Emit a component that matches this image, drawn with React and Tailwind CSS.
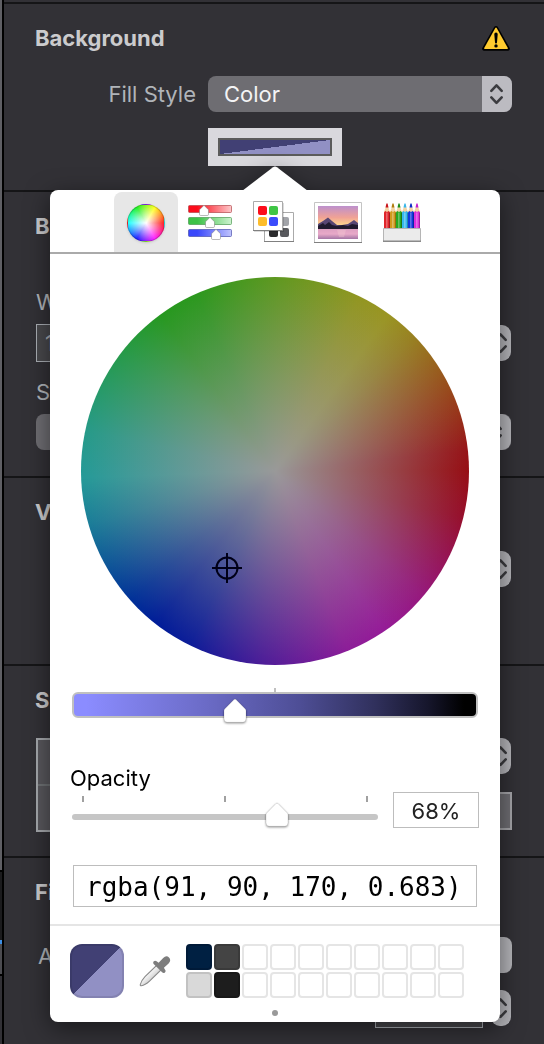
import React, { useState } from "react";

function Chevrons() {
  return (
    <svg viewBox="0 0 30 36" className="h-9 w-[30px] shrink-0" fill="none" stroke="#3c3c40" strokeWidth="2.6" strokeLinecap="round" strokeLinejoin="round" aria-hidden="true">
      <path d="M9.3 14.8 14.5 9.4l5.2 5.4M9.3 21.4l5.2 5.4 5.2-5.4" />
    </svg>
  );
}

function Section({ title, warning, className, children }) {
  return (
    <section className={"border-b-2 border-[#151517] px-8 pt-5 " + className}>
      <div className="-ml-px flex h-7 items-center justify-between">
        <h2 className="text-[22px] leading-7 font-bold text-[#cbcbcd]">{title}</h2>
        {warning}
      </div>
      {children}
    </section>
  );
}

function Warning() {
  return (
    <svg viewBox="0 0 30 28" className="mr-px h-7 w-[30px]" role="img" aria-label="Warning">
      <path d="M13 3.2a2.2 2.2 0 0 1 4 0l11.6 20.6a2 2 0 0 1-1.8 3H3.2a2 2 0 0 1-1.8-3z" fill="#000" />
      <path d="M14.3 4a.9.9 0 0 1 1.4 0L26.8 24a.8.8 0 0 1-.7 1.1H3.9a.8.8 0 0 1-.7-1.1z" fill="#ffcb2f" />
      <path d="M13.3 10.2a1.7 1.7 0 0 1 3.4 0l-.7 8.2a1 1 0 0 1-2 0z" fill="#000" />
      <circle cx="15" cy="21.9" r="1.7" fill="#000" />
    </svg>
  );
}

function Stepper({ label }) {
  return (
    <button aria-label={label} className="mr-px flex h-9 w-5 items-center justify-center overflow-hidden rounded-[9px] bg-[#b4b4b9]">
      <Chevrons />
    </button>
  );
}

function WheelIcon() {
  return <span className="mt-px block size-[38px] rounded-full border border-[#00000030] bg-[radial-gradient(closest-side,#fff,#ffffff00),conic-gradient(from_90deg,#ff2020,#ff20ff,#2020ff,#20ffff,#20f020,#ffff20,#ff2020)] shadow-sm" />;
}

const bars = [
  { y: 1, x: 16, from: "#fb0d1b", to: "#fdc9cb", edge: "#b0474b" },
  { y: 13, x: 22, from: "#3cc146", to: "#cdf3cf", edge: "#4d9a52" },
  { y: 25, x: 28, from: "#3a48fb", to: "#c0c4fd", edge: "#4b51ad" },
];

function SlidersIcon() {
  return (
    <svg viewBox="0 0 44 36" className="h-9 w-11 overflow-visible" aria-hidden="true">
      {bars.map((b) => (
        <g key={b.y}>
          <linearGradient id={"bar" + b.y}>
            <stop offset=".2" stopColor={b.from} />
            <stop offset="1" stopColor={b.to} />
          </linearGradient>
          <rect x=".5" y={b.y + 0.5} width="43" height="7" rx="1" fill={"url(#bar" + b.y + ")"} stroke={b.edge} strokeOpacity=".7" />
          <path transform={`translate(${b.x} ${b.y})`} d="M0 .3 4.500 4.800V9.300q0 1.200-1.200 1.200h-6.600q-1.200 0-1.200-1.200V4.800z" fill="#fff" stroke="#777" strokeWidth=".5" />
        </g>
      ))}
    </svg>
  );
}

function PalettesIcon() {
  return (
    <svg viewBox="0 0 42 42" className="h-[42px] w-[42px] overflow-visible" aria-hidden="true">
      <path d="M11.5 11.5h29v29h-29z" fill="#fff" stroke="#aaa" />
      <path d="M11 40.5h30" stroke="#808080" />
      <g fill="#a2a4a9">
        <rect x="16" y="16" width="9" height="9" rx="2" />
        <rect x="27" y="16" width="9" height="9" rx="2" />
      </g>
      <rect x="16" y="27" width="9" height="9" rx="2" fill="#2c2c2e" />
      <rect x="27" y="27" width="9" height="9" rx="2" fill="#58595d" />
      <path d="M1 2h30v29H1z" fill="#000" opacity=".14" />
      <path d="M.5.5h29v29H.5z" fill="#fff" stroke="#aaa" />
      <path d="M0 29.5h30" stroke="#808080" />
      <rect x="5" y="5" width="9" height="9" rx="2" fill="#fc0d1b" />
      <rect x="16" y="5" width="9" height="9" rx="2" fill="#3fc545" />
      <rect x="5" y="16" width="9" height="9" rx="2" fill="#fdbd2c" />
      <rect x="16" y="16" width="9" height="9" rx="2" fill="#3b4cfc" />
    </svg>
  );
}

function PictureIcon() {
  return (
    <svg viewBox="0 0 48 41" className="h-[41px] w-12" aria-hidden="true">
      <linearGradient id="dusk" x2="0" y2="1">
        <stop offset="0" stopColor="#bd90cd" />
        <stop offset=".5" stopColor="#f0a295" />
        <stop offset=".85" stopColor="#ffd88c" />
      </linearGradient>
      <linearGradient id="lake" x2="0" y2="1">
        <stop offset="0" stopColor="#dda0c1" />
        <stop offset=".5" stopColor="#e8a9c8" />
        <stop offset="1" stopColor="#a375a5" />
      </linearGradient>
      <path d="M.5.5h47v40H.5z" fill="#fff" stroke="#c4c4c4" />
      <path d="M0 40.5h48" stroke="#808080" />
      <path d="M4 4h40v23H4z" fill="url(#dusk)" />
      <path d="M4 22 9 19l5-3.500 4 3.500 5 4 5 0 6-1 6-4 4 3v6H4z" fill="#584673" />
      <path d="m4 24 5-3 2 2 4-3 3 3 5 1 6-1 5 1 4-2 6 1v4H4z" fill="#201a2e" />
      <path d="M4 27h40v10H4z" fill="url(#lake)" />
      <path d="M23 28h9l-2 7h-5z" fill="#f7cdd5" opacity=".35" />
    </svg>
  );
}

const pencils = ["#e0252b", "#d09a1c", "#27a820", "#35b8f0", "#1238dc", "#dd2ddc"];
const tips = ["#c8141c", "#b07c10", "#1f8f1a", "#38b6ea", "#0f2cc8", "#c420d0"];

function PencilsIcon() {
  return (
    <svg viewBox="0 0 38 39" className="h-[39px] w-[38px]" aria-hidden="true">
      {pencils.map((color, i) => (
        <g key={color} transform={`translate(${1 + i * 6} 0)`}>
          <path d="M0 9 3 1l3 8v2H0z" fill="#f3d4a4" />
          <path d="M1.5 4.4 2.4.6h1.2l.9 3.8z" fill={tips[i]} />
          <path d="M0 9.4 1.2 8 3 9l1.8-1L6 9.4V26H0z" fill={color} />
          <path d="M2 9.4h1.6V26H2z" fill="#fff" opacity=".3" />
          <path d="M5 9.4h1V26H5z" fill="#000" opacity=".28" />
        </g>
      ))}
      <path d="M.5 25.5h37v13H.5z" fill="#ebebeb" stroke="#b5b5b5" />
      <path d="M0 38.3h38" stroke="#8a8a8a" strokeWidth="1.4" />
    </svg>
  );
}

function Thumb({ left, top }) {
  return (
    <span className={"pointer-events-none absolute -ml-3 h-[26px] w-6 " + top} style={{ left }}>
      <svg viewBox="0 0 24 26" className="block h-[26px] w-6 overflow-visible drop-shadow-[0_1px_1px_#00000070]" aria-hidden="true">
        <path d="M11 1.5q1-1 2 0l9.4 9.6q.6.6.6 1.6v8.1q0 3.5-3.5 3.5h-15Q1 24.3 1 20.800v-8.100q0-1 .6-1.6z" fill="#fff" stroke="#000" strokeOpacity=".18" strokeWidth=".6" />
      </svg>
    </span>
  );
}

function Eyedropper() {
  return (
    <svg viewBox="0 0 32 32" className="h-8 w-8" aria-hidden="true">
      <linearGradient id="glass" x1="0" y1="0" x2="1" y2="1">
        <stop offset=".35" stopColor="#fff" />
        <stop offset=".7" stopColor="#c4c4c4" />
      </linearGradient>
      <path d="M18.500 9.500 23 14 10.500 26.200Q6 30.300 2.300 30.800 1 30.800 1.300 29.500 2.300 25.500 6 21.600z" fill="url(#glass)" stroke="#8a8a8a" strokeWidth="1.1" />
      <path d="M14.800 6.300q1.400-1.200 2.800 0l2 1.500 4.600-4.800q3-3 5.800-.6 2.600 2.900-.4 6l-4.700 4.400 1 1.700q1.400 1.600 0 3-1.400 1.200-2.800-.2l-8.200-8q-1.400-1.500-.1-3z" fill="#7d7d7d" />
    </svg>
  );
}

const tabs = [
  { name: "Color wheel", icon: WheelIcon },
  { name: "Color sliders", icon: SlidersIcon },
  { name: "Color palettes", icon: PalettesIcon },
  { name: "Image palettes", icon: PictureIcon },
  { name: "Pencils", icon: PencilsIcon },
];

const swatches = [
  "border-[#001a38] bg-[#002042]",
  "border-[#3a3a3a] bg-[#444444]",
  ...Array(8).fill("border-[#e5e5e5] bg-white"),
  "border-[#c2c2c2] bg-[#d9d9d9]",
  "border-[#181818] bg-[#1d1d1d]",
  ...Array(8).fill("border-[#e5e5e5] bg-white"),
];

function ColorPopover() {
  const [tab, setTab] = useState(0);
  const [shade, setShade] = useState(40);
  const [opacity, setOpacity] = useState(68);
  return (
    <div role="dialog" aria-label="Colors" className="absolute top-full left-1/2 z-10 w-[450px] -translate-x-1/2 drop-shadow-[0_6px_12px_#00000080]">
      <svg viewBox="0 0 66 25" className="mx-auto -mb-px block h-[25px] w-[66px]" aria-hidden="true">
        <path d="M0 25 31 1.200q2-1.400 4 0L66 25z" fill="#fff" />
      </svg>
      <div className="rounded-lg bg-white text-black">
        <div role="tablist" className="flex justify-center border-b-2 border-[#aaa] pt-0.5 pr-0.5">
          {tabs.map(({ name, icon: Icon }, i) => (
            <button key={name} role="tab" aria-label={name} aria-selected={tab === i} onClick={() => setTab(i)} className={"flex h-[60px] w-16 items-center justify-center rounded-t-lg " + (tab === i ? "bg-[#e7e7e7]" : "")}>
              <Icon />
            </button>
          ))}
        </div>

        <div className="px-[31px] pt-[23px]">
          <div className="relative aspect-square w-full rounded-full bg-[radial-gradient(closest-side,#999,#99999900),conic-gradient(from_90deg,#960e14_0deg,#960f2c_14deg,#96187c_40deg,#951b98_56deg,#8c1d98_68deg,#4c1c98_94deg,#0c1c98_116deg,#001c98_128deg,#003098_138deg,#1a7c98_164deg,#249a98_178deg,#269a88_192deg,#269a48_218deg,#26981f_234deg,#2c981e_246deg,#629820_272deg,#929621_296deg,#9a9522_306deg,#988020_316deg,#98401a_338deg,#961418_354deg,#960e14_360deg)]">
            <svg viewBox="0 0 30 30" className="absolute top-[71.2%] left-[33.8%] size-[30px]" fill="none" stroke="#000018" strokeWidth="2" aria-hidden="true">
              <circle cx="15" cy="15" r="10.500" />
              <path d="M15 0v30M0 15h30" />
            </svg>
          </div>
        </div>

        <div className="px-[22px] pt-[23px]">
          <div className="mx-auto h-1 w-0.5 bg-[#c0c0c0]" />
          <div className="relative h-[26px] rounded-md border-2 border-[#c0c0c0] bg-[linear-gradient(90deg,#8b8cff_3%,#6c6cc8_32%,#4e4e96_56%,#30305c_75%,#16162c_88%,#000_97%)]">
            <Thumb left={shade + "%"} top="top-1" />
            <input type="range" aria-label="Brightness" value={shade} onChange={(e) => setShade(+e.target.value)} className="absolute inset-0 size-full opacity-0" />
          </div>
        </div>

        <div className="flex items-end pt-[46px] pr-[21px] pl-[22px]">
          <div className="flex-1">
            <label htmlFor="opacity" className="-ml-0.5 block text-[22px] leading-7">Opacity</label>
            <div className="mt-1 flex justify-between px-2.5">
              <span className="h-1.5 w-0.5 bg-[#a0a0a0]" />
              <span className="h-1.5 w-0.5 bg-[#a0a0a0]" />
              <span className="h-1.5 w-0.5 bg-[#a0a0a0]" />
            </div>
            <div className="relative mt-3 mb-2 h-1.5 rounded-full bg-[#c6c6c6]">
              <Thumb left={opacity - 1 + "%"} top="-top-[12px]" />
              <input id="opacity" type="range" value={opacity} onChange={(e) => setOpacity(+e.target.value)} className="absolute inset-0 size-full opacity-0" />
            </div>
          </div>
          <input aria-label="Opacity percent" value={opacity + "%"} readOnly className="ml-[15px] h-9 w-[86px] border border-[#bdbdbd] bg-white pt-0.5 text-center text-[22px] text-[#222] outline-none" />
        </div>

        <div className="px-[23px] pt-[37px]">
          <input aria-label="CSS color" defaultValue="rgba(91, 90, 170, 0.683)" className="block h-[42px] w-full border border-[#bdbdbd] bg-white px-3 pt-0.5 font-['DejaVu_Sans_Mono',monospace] text-[26px] outline-none" />
        </div>

        <div className="mt-[17px] flex items-center border-t-2 border-[#e5e5e5] px-5 pt-[18px]">
          <button aria-label="Current color" className="size-[54px] shrink-0 rounded-xl border-2 border-[#00000018] bg-[linear-gradient(135deg,#414074_50%,#9190c4_50%)] bg-origin-border" />
          <button aria-label="Pick color from screen" className="ml-[15px]"><Eyedropper /></button>
          <div className="ml-[15px] grid grid-cols-10 gap-0.5">
            {swatches.map((style, i) => (
              <button key={i} aria-label={"Saved color " + (i + 1)} className={"size-[26px] rounded border-2 " + style} />
            ))}
          </div>
        </div>
        <div className="flex h-6 items-center justify-center pt-1.5">
          <span className="size-1.5 rounded-full bg-[#999]" />
        </div>
      </div>
    </div>
  );
}

const labelStyle = "text-[22px] leading-7 text-[#b0b4b9]";

export default function App() {
  return (
    <div className="flex min-h-screen overflow-hidden bg-[#323136] font-[Inter,sans-serif]">
      <div className="flex w-1 shrink-0 flex-col border-r-2 border-black bg-[#5f5f64]">
        <div className="h-[870px]" />
        <div className="h-[70px] border-t-2 border-black bg-[#1b1b1d]" />
        <div className="h-1 bg-[#3d8fe6]" />
        <div className="h-[30px] bg-[#4b4b50]" />
        <div className="flex-1 border-t-2 border-black bg-[#323136]" />
      </div>
      <main className="min-w-0 flex-1">
        <div className="h-1 border-b-2 border-[#151517]" />
        <Section title="Background" warning={<Warning />} className="h-[188px]">
          <div className="mt-6 flex items-center">
            <label htmlFor="fill" className={labelStyle + " w-[160px] text-right"}>Fill Style</label>
            <div className="relative ml-3 flex flex-1">
              <select id="fill" className="h-9 flex-1 appearance-none rounded-lg bg-[#6e6d72] px-4 text-[22px] text-[#f4f4f5] outline-none">
                <option>Color</option>
              </select>
              <span className="pointer-events-none absolute right-0 rounded-r-lg bg-[#bcbbc1]"><Chevrons /></span>
            </div>
          </div>
          <div className="relative mt-4 ml-[172px] w-[134px]">
            <button aria-label="Background color" className="block h-[38px] w-full bg-[#d9d8dd] p-2.5">
              <span className="block h-[18px] border-2 border-[#5b5b5b] bg-[linear-gradient(to_bottom_right,#414074_50%,#9190c4_50%)]" />
            </button>
            <ColorPopover />
          </div>
        </Section>

        <Section title="Border" className="h-[286px]">
          <label htmlFor="bw" className={labelStyle + " mt-12 block"}>Width</label>
          <div className="mt-2 flex items-center justify-between">
            <input id="bw" defaultValue="1" className="h-[38px] w-[400px] border border-[#a9adb3] bg-[#48484c] px-2 text-[22px] text-[#a9adb3] outline-none" />
            <Stepper label="Width stepper" />
          </div>
          <label htmlFor="bs" className={labelStyle + " mt-4 block"}>Style</label>
          <div className="relative mt-2 mr-px flex">
            <select id="bs" className="h-9 flex-1 appearance-none rounded-lg bg-[#6e6d72] px-4 text-[22px] text-[#f4f4f5] outline-none"><option>Solid</option></select>
            <span className="pointer-events-none absolute right-0 rounded-r-[9px] bg-[#b4b4b9]"><Chevrons /></span>
          </div>
        </Section>

        <Section title="Visibility" className="h-[188px]">
          <div className="mt-[25px] flex justify-end">
            <Stepper label="Visibility stepper" />
          </div>
        </Section>

        <Section title="Shadow" className="h-[192px]">
          <div className="mt-6 flex items-start justify-between">
            <div className="h-[94px] w-[160px] border-2 border-[#a4a7ab] bg-[#58575c]">
              <div className="h-[46px] border-b-2 border-[#6e7174]" />
            </div>
            <div className="flex flex-col items-end gap-[18px]">
              <Stepper label="Shadow stepper" />
              <button aria-label="Shadow color" className="h-[38px] w-[134px] border-2 border-[#a4a4a8] bg-[#6e6d72]" />
            </div>
          </div>
        </Section>

        <section className="px-8 pt-5">
          <h2 className="-ml-px text-[22px] leading-7 font-bold text-[#cbcbcd]">Filters</h2>
          <div className="mt-[31px] flex items-center justify-between">
            <label htmlFor="add" className={labelStyle + " pt-0.5 pl-0.5"}>Add</label>
            <select id="add" className="h-9 w-[340px] appearance-none rounded-lg bg-[#b4b4b9] px-4 outline-none"><option>Blur</option></select>
          </div>
          <div className="mt-[17px] flex items-start justify-end">
            <div className="mt-5 mr-[29px] flex w-[160px] justify-between">
              {[0, 1, 2, 3, 4, 5].map((n) => <span key={n} className="h-3 w-0.5 bg-[#707075]" />)}
            </div>
            <input aria-label="Amount" className="h-[38px] w-[108px] border border-[#a9adb3] bg-[#48484c] outline-none" />
            <span className="ml-2"><Stepper label="Amount stepper" /></span>
          </div>
        </section>
      </main>
    </div>
  );
}
